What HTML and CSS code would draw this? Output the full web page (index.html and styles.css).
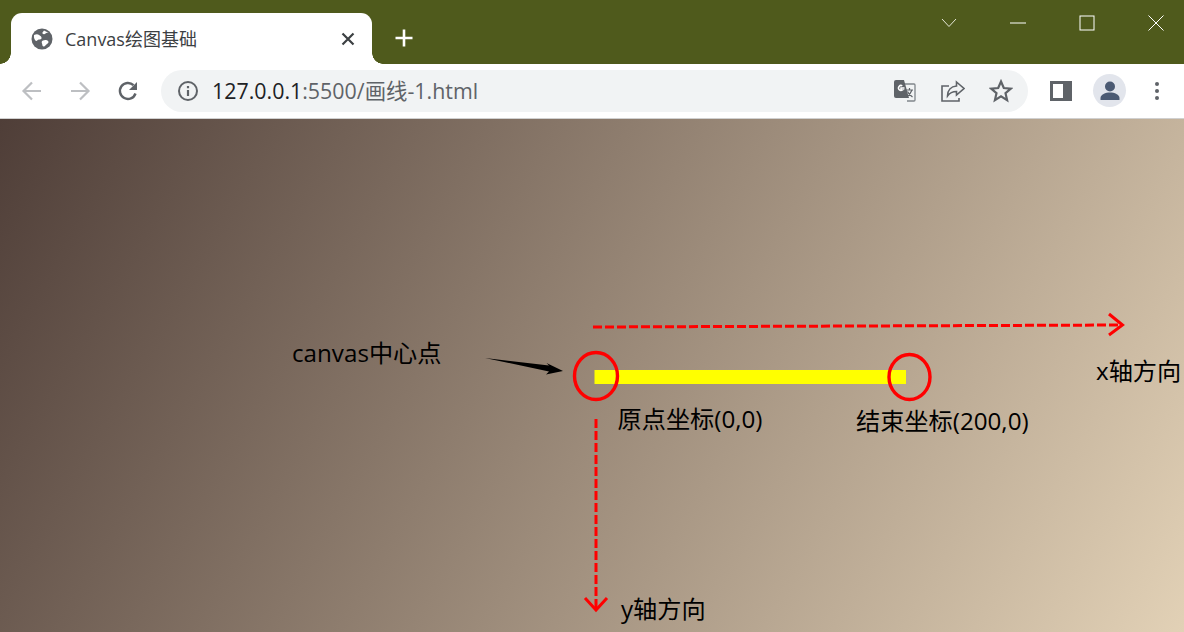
FILE: index.html
```html
<!DOCTYPE html>
<html lang="zh-CN">
<head>
    <meta charset="UTF-8">
    <meta name="viewport" content="width=device-width, initial-scale=1.0">
    <link rel="stylesheet" href="styles.css">
    <title>Canvas绘图基础</title>
</head>
<body>
    <header class="tab-strip">
        <div class="tab">
            <svg class="tab-icon" width="24" height="24" viewBox="0 0 24 24">
                <circle cx="12" cy="12" r="10.5" fill="#5f6368"/>
                <path d="M4 8c2-1 4-1 5 0s2 1 2.500 2.500-1 2-2.500 2-2 2-3 1.500S3.500 11 4 8zM14 3.500c-1 1.500-2 2-1.500 3s2.500 1 3 0 2-1 3.500-.5M13 13.500c2-1 4-.5 5 .5s.5 2-1 3-2 3-3.500 2.500-1-2-1.500-3-.5-2.500 1-3z" fill="#fff"/>
            </svg>
            <span class="tab-title">Canvas绘图基础</span>
            <svg class="tab-close" width="16" height="16" viewBox="0 0 16 16">
                <path d="M2.500 2.500l11 11M13.500 2.500l-11 11" stroke="#3c4043" stroke-width="2.200" fill="none"/>
            </svg>
        </div>
        <svg class="new-tab" width="20" height="20" viewBox="0 0 20 20">
            <path d="M10 1.500v17M1.500 10h17" stroke="#fff" stroke-width="2.600" fill="none"/>
        </svg>
        <div class="window-controls">
            <svg width="16" height="10" viewBox="0 0 16 10"><path d="M1 1l7 7.500L15 1" stroke="#e6e8d8" fill="none"/></svg>
            <svg width="16" height="2" viewBox="0 0 16 2"><path d="M0 1h16" stroke="#fff" fill="none"/></svg>
            <svg width="16" height="16" viewBox="0 0 16 16"><rect x="1" y="1" width="14" height="14" stroke="#fff" fill="none"/></svg>
            <svg width="16" height="16" viewBox="0 0 16 16"><path d="M.5.500l15 15M15.500.500l-15 15" stroke="#fff" fill="none"/></svg>
        </div>
    </header>

    <nav class="toolbar">
        <svg class="nav-icon" width="24" height="24" viewBox="0 0 24 24">
            <path d="M21 12H4M12 3.500L3.500 12l8.500 8.500" stroke="#bdbfc2" stroke-width="2.200" fill="none"/>
        </svg>
        <svg class="nav-icon" width="24" height="24" viewBox="0 0 24 24">
            <path d="M3 12h17M12 3.500l8.500 8.500-8.500 8.500" stroke="#bdbfc2" stroke-width="2.200" fill="none"/>
        </svg>
        <svg class="nav-icon" width="24" height="24" viewBox="0 0 24 24">
            <path d="M19.500 14.500A8 8 0 1 1 17.500 6.200" stroke="#5f6368" stroke-width="2.400" fill="none"/>
            <path d="M21 3v8h-8z" fill="#5f6368"/>
        </svg>
        <div class="omnibox">
            <svg width="22" height="22" viewBox="0 0 22 22">
                <circle cx="11" cy="11" r="9" stroke="#5f6368" stroke-width="2" fill="none"/>
                <path d="M11 10v6M11 6v2.200" stroke="#5f6368" stroke-width="2.200" fill="none"/>
            </svg>
            <span class="url"><span class="url-host">127.0.0.1</span>:5500/画线-1.html</span>
            <div class="omni-actions">
                <svg width="24" height="24" viewBox="0 0 24 24">
                    <path d="M10 5h11a1 1 0 0 1 1 1v15a1 1 0 0 1-1 1h-7" stroke="#80868b" stroke-width="1.300" fill="#f1f3f4"/>
                    <path d="M3 1h8l5 18H3a2 2 0 0 1-2-2V3a2 2 0 0 1 2-2z" fill="#5f6368"/>
                    <path d="M11.500 9H8v2h1.500A2.500 2.500 0 1 1 9.300 6.800" stroke="#fff" stroke-width="1.500" fill="none"/>
                    <path d="M13 11h7M16.500 9v2M19 11c-1 3-3 5-5.500 7M14.500 12.500c1 2 3 4 5 5.500" stroke="#5f6368" stroke-width="1.200" fill="none"/>
                </svg>
                <svg width="24" height="24" viewBox="0 0 24 24">
                    <path d="M8 7H1v15h17v-3" stroke="#5f6368" stroke-width="1.600" fill="none"/>
                    <path d="M15.500 3l7.500 6.500-7.500 6.500v-3.500c-4 0-6.500 1-9 4.500 0-5.500 3.500-9.500 9-10z" stroke="#5f6368" stroke-width="1.600" fill="#f1f3f4"/>
                </svg>
                <svg width="24" height="24" viewBox="0 0 24 24">
                    <path d="M12 2.500l2.800 6.500 7 .6-5.300 4.600 1.600 6.900-6.100-3.700-6.100 3.700 1.600-6.900-5.300-4.600 7-.6z" stroke="#5f6368" stroke-width="2.200" fill="none"/>
                </svg>
            </div>
        </div>
        <div class="browser-actions">
            <svg width="22" height="22" viewBox="0 0 22 22">
                <path d="M0 1h22v20H0z" fill="#5f6368"/>
                <path d="M3 4h10v14H3z" fill="#fff"/>
            </svg>
            <div class="avatar">
                <svg width="26" height="26" viewBox="0 0 26 26">
                    <circle cx="13" cy="8.500" r="5" fill="#4b5a73"/>
                    <path d="M3.500 22v-2c0-3.500 5-5.500 9.500-5.500s9.500 2 9.500 5.500v2z" fill="#4b5a73"/>
                </svg>
            </div>
            <div class="menu-dots"><i></i><i></i><i></i></div>
        </div>
    </nav>

    <main class="stage">
        <svg class="diagram" width="1184" height="513" viewBox="0 119 1184 513">
            <rect x="594.500" y="370" width="311.500" height="14" fill="#ff0"/>
            <g fill="none" stroke="#f00" stroke-width="3">
                <ellipse cx="596" cy="376" rx="21.500" ry="23.500" stroke-width="3.400"/>
                <ellipse cx="909.500" cy="377" rx="20.500" ry="22.500" stroke-width="3.400"/>
                <path d="M593 327L1122 325" stroke-dasharray="9 3"/>
                <path d="M1109 314L1122.500 325L1109 335"/>
                <path d="M596 419V610" stroke-dasharray="9 3"/>
                <path d="M585 598L596 610L607 598"/>
            </g>
            <path d="M485 358L549 365.500L546.500 363L563 371L546 374.500L549 371.500Z" fill="#000"/>
        </svg>
        <span class="label label-center">canvas中心点</span>
        <span class="label label-origin">原点坐标(0,0)</span>
        <span class="label label-end">结束坐标(200,0)</span>
        <span class="label label-x">x轴方向</span>
        <span class="label label-y">y轴方向</span>
    </main>
</body>
</html>
```

FILE: styles.css
```css
*, body{
    box-sizing: border-box;
    margin: 0;
}
html, body{
    height: 100%;
    overflow: hidden;
}
body{
    display: flex;
    flex-direction: column;
    font-family: "Open Sans", "Noto Sans CJK SC", sans-serif;
    background: #fff;
}
svg{
    display: block;
    flex-shrink: 0;
}

/* tab strip */
.tab-strip{
    height: 64px;
    flex-shrink: 0;
    display: flex;
    align-items: flex-end;
    padding-left: 11px;
    background: #4f5a1c;
}
.tab{
    position: relative;
    width: 361px;
    height: 51px;
    display: flex;
    align-items: center;
    padding: 0 16px 0 19px;
    background: #fff;
    border-radius: 11px 11px 0 0;
}
.tab::before,
.tab::after{
    position: absolute;
    content: '';
    bottom: 0;
    width: 11px;
    height: 11px;
}
.tab::before{
    left: -11px;
    background: radial-gradient(circle at 0 0, transparent 10.5px, #fff 11px);
}
.tab::after{
    right: -11px;
    background: radial-gradient(circle at 100% 0, transparent 10.5px, #fff 11px);
}
.tab-title{
    flex: 1;
    margin: 0 0 2px 11px;
    font-size: 18px;
    color: #3c4043;
    white-space: nowrap;
}
.new-tab{
    margin: 0 0 16px 22px;
}
.window-controls{
    display: flex;
    align-items: center;
    gap: 53px;
    margin-left: auto;
    align-self: flex-start;
    height: 46px;
    padding-right: 20px;
}

/* toolbar */
.toolbar{
    height: 55px;
    flex-shrink: 0;
    display: flex;
    align-items: center;
    gap: 24px;
    padding: 0 0 1px 20px;
    background: #fff;
    border-bottom: 1px solid #d0d0d0;
}
.omnibox{
    width: 867px;
    height: 42px;
    display: flex;
    align-items: center;
    margin-left: -3px;
    padding: 0 15px 0 16px;
    border-radius: 21px;
    background: #f1f3f4;
}
.url{
    margin: 0 0 2px 13px;
    font-size: 21.400px;
    color: #5f6368;
    white-space: nowrap;
}
.url-host{
    color: #202124;
}
.omni-actions{
    display: flex;
    align-items: center;
    gap: 24px;
    margin-left: auto;
}
.browser-actions{
    display: flex;
    align-items: center;
    gap: 21px;
    margin-left: -2px;
}
.avatar{
    width: 33px;
    height: 33px;
    display: flex;
    align-items: center;
    justify-content: center;
    border-radius: 50%;
    background: #e2e5ec;
}
.menu-dots{
    display: flex;
    flex-direction: column;
    gap: 3px;
    margin-left: 8px;
}
.menu-dots i{
    width: 4px;
    height: 4px;
    border-radius: 50%;
    background: #5f6368;
}

/* page with the drawing */
.stage{
    position: relative;
    flex: 1;
    background: linear-gradient(120deg, #4f3e38, #e2d1b6);
}
.diagram{
    position: absolute;
    top: 0;
    left: 0;
}
.label{
    position: absolute;
    font-size: 24.200px;
    line-height: 32px;
    color: #000;
    white-space: nowrap;
}
.label-center{
    top: 218px;
    left: 292px;
}
.label-origin{
    top: 284px;
    left: 617.500px;
}
.label-end{
    top: 286px;
    left: 856px;
}
.label-x{
    top: 236px;
    left: 1096px;
}
.label-y{
    top: 474px;
    left: 621px;
}
```
